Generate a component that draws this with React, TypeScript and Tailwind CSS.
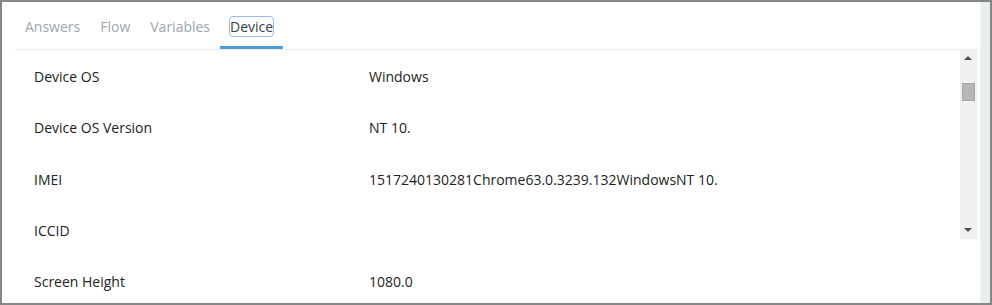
import React from "react";

const rows: [string, string][] = [
  ["Device OS", "Windows"],
  ["Device OS Version", "NT 10."],
  ["IMEI", "1517240130281Chrome63.0.3239.132WindowsNT 10."],
  ["ICCID", ""],
  ["Screen Height", "1080.0"],
];

const tabs = ["Answers", "Flow", "Variables", "Device"];

export default function App() {
  return (
    <div
      className="w-[992px] h-[305px] border-2 border-[#878787] bg-white flex overflow-hidden"
      style={{ fontFamily: '"Open Sans", "Noto Sans", sans-serif' }}
    >
      <div className="relative flex-1 flex flex-col pl-[13px] min-w-0">
        <div className="flex h-[47px] shrink-0 pt-[2px]">
          {tabs.map((t) => {
            const active = t === "Device";
            return (
              <div
                key={t}
                className={
                  "relative flex items-center px-[10px] text-[14px] " +
                  (active ? "text-[#38424c]" : "text-[#9ba6ae]")
                }
              >
                {active ? (
                  <span className="rounded-[3px] leading-[19px] outline outline-[1.5px] outline-[#97bbf6]">
                    {t}
                  </span>
                ) : (
                  <span>{t}</span>
                )}
                {active && (
                  <div className="absolute left-0 right-0 bottom-0 h-[3px] bg-[#4c9dd7]" />
                )}
              </div>
            );
          })}
        </div>
        <div className="h-px bg-[#ebebeb] mr-[20px] shrink-0" />
        <div className="flex flex-col pt-[1px]">
          {rows.map(([k, v]) => (
            <div
              key={k}
              className="flex items-center h-[51.3px] shrink-0 text-[14px] text-[#222]"
            >
              <div className="w-[354px] pl-[19px] shrink-0">{k}</div>
              <div>{v}</div>
            </div>
          ))}
        </div>
        {/* scrollbar overlay */}
        <div className="absolute left-[958px] top-[47px] w-[17px] h-[190px] bg-[#f0f0f0]">
          <div className="absolute left-[4px] top-[7px] w-0 h-0 border-l-[4px] border-r-[4px] border-b-[4px] border-l-transparent border-r-transparent border-b-[#505050]" />
          <div className="absolute left-[2px] top-[34px] w-[13px] h-[18px] bg-[#b6b6b6] border border-[#a5a5a5]" />
          <div className="absolute left-[4px] bottom-[7px] w-0 h-0 border-l-[4px] border-r-[4px] border-t-[4px] border-l-transparent border-r-transparent border-t-[#505050]" />
        </div>
      </div>
      <div className="w-[10px] shrink-0 bg-[#e9eef0] border-l border-[#f2f5f6]" />
    </div>
  );
}
